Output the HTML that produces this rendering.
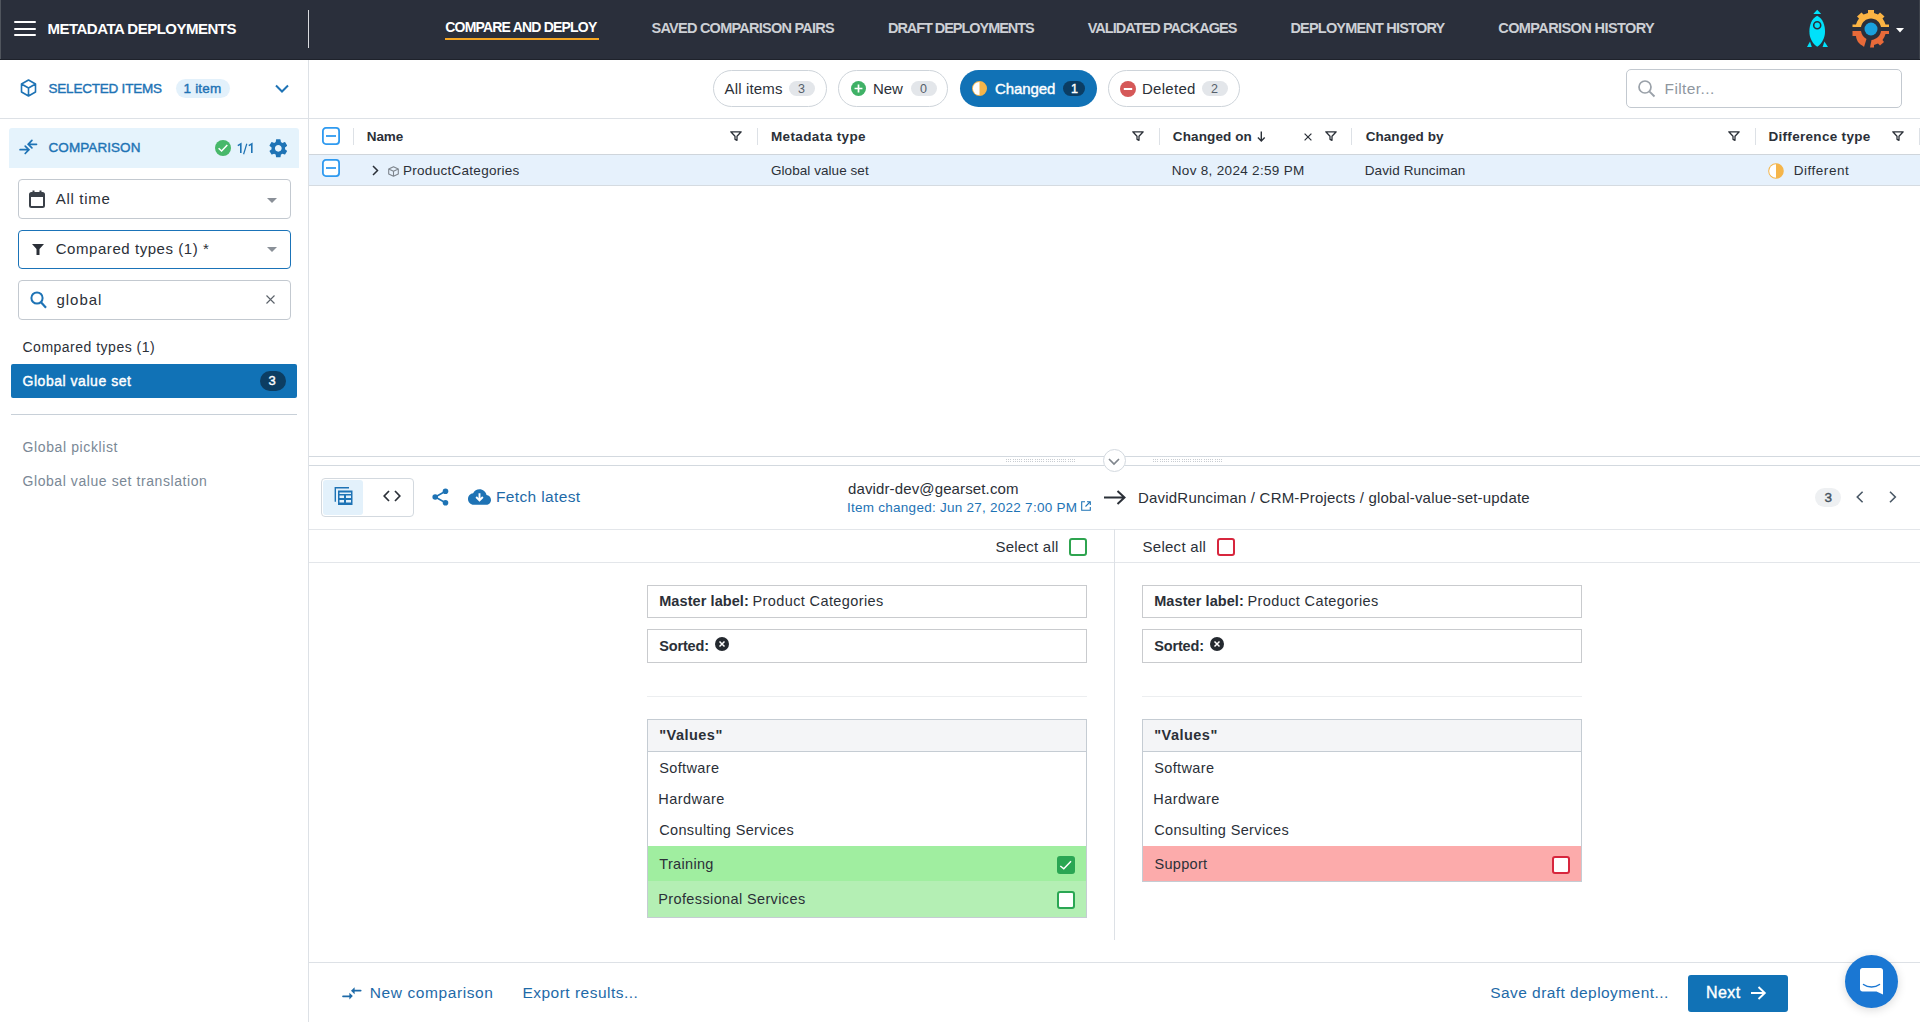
<!DOCTYPE html>
<html><head><meta charset="utf-8"><style>
*{box-sizing:border-box;margin:0;padding:0}
html,body{width:1920px;height:1022px;overflow:hidden;background:#fff;font-family:"Liberation Sans",sans-serif;color:#2b3038}
.a{position:absolute;white-space:nowrap}
.b{position:absolute}
svg{position:absolute;overflow:visible}
</style></head><body><div class="b" style="left:0px;top:0px;width:1920px;height:60px;background:#2a2f3b"></div><div class="b" style="left:0px;top:59px;width:1920px;height:1px;background:#1e222b"></div><div class="b" style="left:0px;top:0px;width:1px;height:59px;background:#50555d"></div><div class="b" style="left:1919px;top:0px;width:1px;height:59px;background:#3d424b"></div><div class="b" style="left:14px;top:21px;width:22px;height:2px;background:#fff;border-radius:1px"></div><div class="b" style="left:14px;top:28px;width:22px;height:2px;background:#fff;border-radius:1px"></div><div class="b" style="left:14px;top:34px;width:22px;height:2px;background:#fff;border-radius:1px"></div><div class="a" style="left:47.50px;top:21.25px;font-size:15px;line-height:15px;font-weight:bold;color:#ffffff;letter-spacing:-0.508px;">METADATA DEPLOYMENTS</div><div class="b" style="left:308px;top:10px;width:1px;height:38px;background:#d9dbdf"></div><div class="a" style="left:445.30px;top:20.30px;font-size:14px;line-height:14px;font-weight:bold;color:#ffffff;letter-spacing:-0.809px;">COMPARE AND DEPLOY</div><div class="b" style="left:445px;top:38px;width:154px;height:2px;background:#f5a623"></div><div class="a" style="left:651.50px;top:20.57px;font-size:14.5px;line-height:14.5px;font-weight:bold;color:#cdd0d5;letter-spacing:-0.753px;">SAVED COMPARISON PAIRS</div><div class="a" style="left:888.00px;top:20.57px;font-size:14.5px;line-height:14.5px;font-weight:bold;color:#cdd0d5;letter-spacing:-1.054px;">DRAFT DEPLOYMENTS</div><div class="a" style="left:1087.70px;top:20.57px;font-size:14.5px;line-height:14.5px;font-weight:bold;color:#cdd0d5;letter-spacing:-0.958px;">VALIDATED PACKAGES</div><div class="a" style="left:1290.40px;top:20.57px;font-size:14.5px;line-height:14.5px;font-weight:bold;color:#cdd0d5;letter-spacing:-0.795px;">DEPLOYMENT HISTORY</div><div class="a" style="left:1498.30px;top:20.57px;font-size:14.5px;line-height:14.5px;font-weight:bold;color:#cdd0d5;letter-spacing:-0.596px;">COMPARISON HISTORY</div><svg style="left:1807px;top:10px" width="22" height="38" viewBox="0 0 22 38">
<path d="M10.2 -0.2 L14.2 3.9 L6.3 3.9 Z" fill="#00e1fa"/>
<path d="M10.2 5.7 C15.8 8.5 18 15 18 21.5 C18 28 15 33.5 10.2 36.8 C5.4 33.5 2.4 28 2.4 21.5 C2.4 15 4.6 8.5 10.2 5.7 Z" fill="#00e1fa"/>
<circle cx="10.2" cy="15.2" r="3.5" fill="none" stroke="#2a2f3b" stroke-width="1.6"/>
<path d="M3 31.6 L4.8 37 L0 37 Z" fill="#00e1fa"/><path d="M17.4 31.6 L21 37 L15.6 37 Z" fill="#00e1fa"/>
</svg><svg style="left:1852px;top:10px" width="38" height="38" viewBox="0 0 38 38">
<path d="M16 0 H22 V3 L26 4.5 L28 2.5 L32.5 6.5 L30.5 8.5 C32 10.5 33 12.5 33.5 14.5 H37 V17 H29 C28 12 24 8.5 19 8.5 C14 8.5 10 12 9 17 H0.5 V14.5 H4 C4.5 12.5 5.5 10.5 7 8.5 L5 6.5 L9.5 2.5 L11.5 4.5 L16 3 Z" fill="#fbb443"/>
<path d="M0.5 21 H9 C9.5 24.5 11.5 27.5 14.5 29 L12 37 L11 36 L8.5 34.5 L6 32 C5 30 4 28 4 26 H0.5 Z" fill="#e86a39"/>
<path d="M37 21 H29 C28.5 26 24 29.5 19.5 30 L18 37.5 H22 V35 L26 33.5 L28 35.5 L32 32 L30.5 30 C32 28 33 26 33.5 24 H37 Z" fill="#e86a39"/>
<circle cx="19" cy="19" r="6.5" fill="#1aa0dc"/>
</svg><svg style="left:1896px;top:27.5px" width="8" height="5" viewBox="0 0 8 5"><path d="M0 0 H8 L4 4.5 Z" fill="#fff"/></svg><div class="b" style="left:308px;top:60px;width:1px;height:962px;background:#dde1e6"></div><div class="b" style="left:0px;top:118px;width:308px;height:1px;background:#dde1e6"></div><svg style="left:20px;top:79px" width="17" height="18" viewBox="0 0 17 18">
<path d="M8.5 1 L15.5 5 V13 L8.5 17 L1.5 13 V5 Z M1.5 5 L8.5 9 L15.5 5 M8.5 9 V17" fill="none" stroke="#1e73b5" stroke-width="1.6" stroke-linejoin="round"/></svg><div class="a" style="left:48.50px;top:81.53px;font-size:13.5px;line-height:13.5px;font-weight:normal;color:#1e73b5;letter-spacing:-0.213px;-webkit-text-stroke:0.4px #1e73b5;">SELECTED ITEMS</div><div class="b" style="left:176px;top:79px;width:54px;height:19px;background:#e3f1fb;border-radius:10px"></div><div class="a" style="left:183.50px;top:81.53px;font-size:13.5px;line-height:13.5px;font-weight:normal;color:#1e73b5;letter-spacing:0.197px;-webkit-text-stroke:0.4px #1e73b5;">1 item</div><svg style="left:275px;top:84px" width="14" height="9" viewBox="0 0 14 9"><path d="M1 1.5 L7 7.5 L13 1.5" fill="none" stroke="#1e73b5" stroke-width="2"/></svg><div class="b" style="left:9px;top:128px;width:290px;height:40px;background:#e5f3fc;border-radius:3px 3px 0 0"></div><svg style="left:19px;top:140px" width="19" height="15" viewBox="0 0 19 15">
<path d="M1.1 9.7 H9.6 M6.2 6.1 L9.9 9.7 L6.2 13.5" fill="none" stroke="#1e73b5" stroke-width="1.7" stroke-linecap="round"/>
<path d="M17.5 4.3 H9.5 M12.9 0.4 L9.2 4.3 L12.9 7.9" fill="none" stroke="#1e73b5" stroke-width="1.7" stroke-linecap="round"/></svg><div class="a" style="left:48.50px;top:141.33px;font-size:13.5px;line-height:13.5px;font-weight:normal;color:#1e73b5;letter-spacing:0.077px;-webkit-text-stroke:0.4px #1e73b5;">COMPARISON</div><svg style="left:215px;top:140px" width="16" height="16" viewBox="0 0 16 16"><circle cx="8" cy="8" r="8" fill="#48b86a"/>
<path d="M3.6 8.2 L6.6 11 L12.3 5" fill="none" stroke="#fff" stroke-width="1.5"/></svg><svg style="left:237px;top:143px" width="16" height="12" viewBox="0 0 16 12"><path d="M0.8 2.6 L3.8 0.9 V10" fill="none" stroke="#1e73b5" stroke-width="1.6"/><path d="M9.8 0.8 L6.6 11.2" stroke="#1e73b5" stroke-width="1.2"/><path d="M11.8 2.6 L14.8 0.9 V10" fill="none" stroke="#1e73b5" stroke-width="1.6"/></svg><svg style="left:267px;top:137.2px" width="22.6" height="22.6" viewBox="0 0 24 24"><path fill="#1e73b5" d="M19.14 12.94c.04-.3.06-.61.06-.94 0-.32-.02-.64-.07-.94l2.03-1.58a.49.49 0 0 0 .12-.61l-1.92-3.32a.488.488 0 0 0-.59-.22l-2.39.96c-.5-.38-1.03-.7-1.62-.94l-.36-2.54a.484.484 0 0 0-.48-.41h-3.84c-.24 0-.43.17-.47.41l-.36 2.54c-.59.24-1.13.57-1.62.94l-2.39-.96c-.22-.08-.47 0-.59.22L2.74 8.87c-.12.21-.08.47.12.61l2.03 1.58c-.05.3-.09.63-.09.94s.02.64.07.94l-2.03 1.58a.49.49 0 0 0-.12.61l1.92 3.32c.12.22.37.29.59.22l2.39-.96c.5.38 1.03.7 1.62.94l.36 2.54c.05.24.24.41.48.41h3.84c.24 0 .44-.17.47-.41l.36-2.54c.59-.24 1.13-.56 1.62-.94l2.39.96c.22.08.47 0 .59-.22l1.92-3.32c.12-.22.07-.47-.12-.61l-2.01-1.58zM12 15.6c-1.98 0-3.6-1.62-3.6-3.6s1.62-3.6 3.6-3.6 3.6 1.62 3.6 3.6-1.62 3.6-3.6 3.6z"/></svg><div class="b" style="left:18px;top:179px;width:273px;height:40px;border:1px solid #c3c9d0;border-radius:4px;background:#fff"></div><svg style="left:29px;top:190px" width="16" height="18" viewBox="0 0 16 18">
<rect x="1" y="3" width="14" height="14" rx="1.5" fill="none" stroke="#3a4048" stroke-width="2"/><rect x="1" y="3" width="14" height="4" fill="#3a4048"/>
<rect x="3.5" y="0.5" width="2" height="3" fill="#3a4048"/><rect x="10.5" y="0.5" width="2" height="3" fill="#3a4048"/></svg><div class="a" style="left:55.70px;top:191.25px;font-size:15px;line-height:15px;font-weight:normal;color:#2b3038;letter-spacing:0.710px;">All time</div><svg style="left:267px;top:197.5px" width="10" height="5" viewBox="0 0 10 5"><path d="M0 0 H10 L5 5 Z" fill="#8a9098"/></svg><div class="b" style="left:18px;top:230px;width:273px;height:39px;border:1px solid #1a73b8;border-radius:4px;background:#fff"></div><svg style="left:31.5px;top:243.5px" width="12" height="11" viewBox="0 0 12 11"><path d="M0 0 H12 L7.5 5 V11 H4.5 V5 Z" fill="#2b3038"/></svg><div class="a" style="left:55.70px;top:241.25px;font-size:15px;line-height:15px;font-weight:normal;color:#2b3038;letter-spacing:0.557px;">Compared types (1) *</div><svg style="left:267px;top:246.5px" width="10" height="5" viewBox="0 0 10 5"><path d="M0 0 H10 L5 5 Z" fill="#8a9098"/></svg><div class="b" style="left:18px;top:280px;width:273px;height:40px;border:1px solid #c3c9d0;border-radius:4px;background:#fff"></div><svg style="left:30px;top:291px" width="17" height="18" viewBox="0 0 17 18"><circle cx="7" cy="7" r="5.6" fill="none" stroke="#1e73b5" stroke-width="2"/><path d="M11 11.3 L16 16.8" stroke="#1e73b5" stroke-width="2.2"/></svg><div class="a" style="left:56.50px;top:292.25px;font-size:15px;line-height:15px;font-weight:normal;color:#2b3038;letter-spacing:0.960px;">global</div><svg style="left:265.5px;top:294.5px" width="9" height="9" viewBox="0 0 9 9"><path d="M0.5 0.5 L8.5 8.5 M8.5 0.5 L0.5 8.5" stroke="#5b626a" stroke-width="1.1"/></svg><div class="a" style="left:22.50px;top:339.70px;font-size:14px;line-height:14px;font-weight:normal;color:#2b3038;letter-spacing:0.497px;">Compared types (1)</div><div class="b" style="left:11px;top:364px;width:286px;height:34px;background:#1172b6;border-radius:2px"></div><div class="a" style="left:22.50px;top:373.80px;font-size:14px;line-height:14px;font-weight:normal;color:#ffffff;letter-spacing:0.533px;-webkit-text-stroke:0.4px #ffffff;">Global value set</div><div class="b" style="left:260px;top:371px;width:26px;height:20px;background:#0c3d62;border-radius:10px"></div><div class="a" style="left:268.50px;top:374.45px;font-size:13px;line-height:13px;font-weight:normal;color:#ffffff;letter-spacing:0.000px;-webkit-text-stroke:0.4px #ffffff;">3</div><div class="b" style="left:11px;top:414px;width:286px;height:1px;background:#c8d0d8"></div><div class="a" style="left:22.50px;top:440.40px;font-size:14px;line-height:14px;font-weight:normal;color:#7a8896;letter-spacing:0.616px;">Global picklist</div><div class="a" style="left:22.50px;top:474.10px;font-size:14px;line-height:14px;font-weight:normal;color:#7a8896;letter-spacing:0.571px;">Global value set translation</div><div class="b" style="left:309px;top:118px;width:1611px;height:1px;background:#dde1e6"></div><div class="b" style="left:712.5px;top:70px;width:114.5px;height:37px;border-radius:19px;border:1px solid #ced4da;background:#fff"></div><div class="a" style="left:724.50px;top:81.25px;font-size:15px;line-height:15px;font-weight:normal;color:#2b3038;letter-spacing:0.166px;">All items</div><div class="b" style="left:789px;top:81px;width:26px;height:15px;background:#e3e6ea;border-radius:8px"></div><div class="a" style="left:798.00px;top:83.17px;font-size:12.5px;line-height:12.5px;font-weight:normal;color:#56606b;letter-spacing:0.000px;">3</div><div class="b" style="left:838px;top:70px;width:110px;height:37px;border-radius:19px;border:1px solid #ced4da;background:#fff"></div><svg style="left:851px;top:81px" width="15" height="15" viewBox="0 0 16 16"><circle cx="8" cy="8" r="8" fill="#3fb166"/><path d="M8 3.8 V12.2 M3.8 8 H12.2" stroke="#fff" stroke-width="1.8"/></svg><div class="a" style="left:873.00px;top:81.25px;font-size:15px;line-height:15px;font-weight:normal;color:#2b3038;letter-spacing:-0.087px;">New</div><div class="b" style="left:911px;top:81px;width:26px;height:15px;background:#e3e6ea;border-radius:8px"></div><div class="a" style="left:920.00px;top:83.17px;font-size:12.5px;line-height:12.5px;font-weight:normal;color:#56606b;letter-spacing:0.000px;">0</div><div class="b" style="left:959.7px;top:70px;width:137.29999999999995px;height:37px;border-radius:19px;background:#1172b6"></div><svg style="left:972px;top:81px" width="15" height="15" viewBox="0 0 16 16"><circle cx="8" cy="8" r="7" fill="#f5b54a" stroke="#f5b54a" stroke-width="2"/><path d="M8 1 A7 7 0 0 0 8 15 Z" fill="#fff"/></svg><div class="a" style="left:995.00px;top:81.25px;font-size:15px;line-height:15px;font-weight:normal;color:#ffffff;letter-spacing:-0.091px;-webkit-text-stroke:0.4px #ffffff;">Changed</div><div class="b" style="left:1063px;top:81px;width:22px;height:15px;background:#0b3d64;border-radius:8px"></div><div class="a" style="left:1071.00px;top:83.17px;font-size:12.5px;line-height:12.5px;font-weight:normal;color:#ffffff;letter-spacing:0.000px;-webkit-text-stroke:0.4px #ffffff;">1</div><div class="b" style="left:1108px;top:70px;width:132px;height:37px;border-radius:19px;border:1px solid #ced4da;background:#fff"></div><svg style="left:1120px;top:81px" width="16" height="16" viewBox="0 0 16 16"><circle cx="8" cy="8" r="8" fill="#d55858"/><path d="M3.8 8 H12.2" stroke="#fff" stroke-width="2"/></svg><div class="a" style="left:1142.00px;top:81.25px;font-size:15px;line-height:15px;font-weight:normal;color:#2b3038;letter-spacing:0.273px;">Deleted</div><div class="b" style="left:1202px;top:81px;width:26px;height:15px;background:#e3e6ea;border-radius:8px"></div><div class="a" style="left:1211.00px;top:83.17px;font-size:12.5px;line-height:12.5px;font-weight:normal;color:#56606b;letter-spacing:0.000px;">2</div><div class="b" style="left:1626.3px;top:69.2px;width:276.2px;height:38.6px;border:1px solid #c3c9d0;border-radius:5px;background:#fff"></div><svg style="left:1638px;top:80px" width="18" height="17" viewBox="0 0 18 17"><circle cx="7" cy="7" r="6" fill="none" stroke="#9aa1a9" stroke-width="1.7"/><path d="M11.3 11.3 L16.5 16.5" stroke="#9aa1a9" stroke-width="1.9"/></svg><div class="a" style="left:1664.50px;top:81.03px;font-size:15.5px;line-height:15.5px;font-weight:normal;color:#8f979f;letter-spacing:0.412px;">Filter...</div><div class="b" style="left:309px;top:154px;width:1611px;height:1px;background:#cfd5db"></div><div class="b" style="left:309px;top:155px;width:1611px;height:30px;background:#e6f1fc"></div><div class="b" style="left:309px;top:185px;width:1611px;height:1px;background:#d5dbe1"></div><svg style="left:322.3px;top:127px" width="18" height="18" viewBox="0 0 18 18"><rect x="0.9" y="0.9" width="16.2" height="16.2" rx="3" fill="#fff" stroke="#2f9af0" stroke-width="1.8"/><path d="M4 9 H14" stroke="#2f9af0" stroke-width="1.8"/></svg><svg style="left:322.3px;top:159.3px" width="18" height="18" viewBox="0 0 18 18"><rect x="0.9" y="0.9" width="16.2" height="16.2" rx="3" fill="#fff" stroke="#2f9af0" stroke-width="1.8"/><path d="M4 9 H14" stroke="#2f9af0" stroke-width="1.8"/></svg><div class="b" style="left:352.5px;top:128px;width:1px;height:17px;background:#dde1e6"></div><div class="b" style="left:756.5px;top:128px;width:1px;height:17px;background:#dde1e6"></div><div class="b" style="left:1159px;top:128px;width:1px;height:17px;background:#dde1e6"></div><div class="b" style="left:1350.5px;top:128px;width:1px;height:17px;background:#dde1e6"></div><div class="b" style="left:1754.5px;top:128px;width:1px;height:17px;background:#dde1e6"></div><div class="b" style="left:1918.5px;top:128px;width:1px;height:17px;background:#dde1e6"></div><div class="a" style="left:366.80px;top:129.72px;font-size:13.5px;line-height:13.5px;font-weight:bold;color:#2b3038;letter-spacing:-0.120px;">Name</div><svg style="left:729.8px;top:131px" width="12" height="10" viewBox="0 0 12 10"><path d="M0.8 0.8 H11.2 L7 5.3 V9.3 L5 8.3 V5.3 Z" fill="none" stroke="#2b3038" stroke-width="1.3" stroke-linejoin="round"/></svg><div class="a" style="left:771.00px;top:129.72px;font-size:13.5px;line-height:13.5px;font-weight:bold;color:#2b3038;letter-spacing:0.374px;">Metadata type</div><svg style="left:1132px;top:131px" width="12" height="10" viewBox="0 0 12 10"><path d="M0.8 0.8 H11.2 L7 5.3 V9.3 L5 8.3 V5.3 Z" fill="none" stroke="#2b3038" stroke-width="1.3" stroke-linejoin="round"/></svg><div class="a" style="left:1172.80px;top:129.72px;font-size:13.5px;line-height:13.5px;font-weight:bold;color:#2b3038;letter-spacing:0.117px;">Changed on</div><svg style="left:1257px;top:130.5px" width="9" height="11" viewBox="0 0 9 11"><path d="M4.3 0.5 V10 M0.9 6.6 L4.3 10 L7.7 6.6" fill="none" stroke="#2b3038" stroke-width="1.4"/></svg><svg style="left:1303.5px;top:132.5px" width="8" height="8" viewBox="0 0 8 8"><path d="M0.6 0.6 L7.4 7.4 M7.4 0.6 L0.6 7.4" stroke="#2b3038" stroke-width="1.2"/></svg><svg style="left:1324.6px;top:131px" width="12" height="10" viewBox="0 0 12 10"><path d="M0.8 0.8 H11.2 L7 5.3 V9.3 L5 8.3 V5.3 Z" fill="none" stroke="#2b3038" stroke-width="1.3" stroke-linejoin="round"/></svg><div class="a" style="left:1365.70px;top:129.72px;font-size:13.5px;line-height:13.5px;font-weight:bold;color:#2b3038;letter-spacing:0.061px;">Changed by</div><svg style="left:1727.6px;top:131px" width="12" height="10" viewBox="0 0 12 10"><path d="M0.8 0.8 H11.2 L7 5.3 V9.3 L5 8.3 V5.3 Z" fill="none" stroke="#2b3038" stroke-width="1.3" stroke-linejoin="round"/></svg><div class="a" style="left:1768.40px;top:129.72px;font-size:13.5px;line-height:13.5px;font-weight:bold;color:#2b3038;letter-spacing:0.313px;">Difference type</div><svg style="left:1892px;top:131px" width="12" height="10" viewBox="0 0 12 10"><path d="M0.8 0.8 H11.2 L7 5.3 V9.3 L5 8.3 V5.3 Z" fill="none" stroke="#2b3038" stroke-width="1.3" stroke-linejoin="round"/></svg><svg style="left:371.5px;top:165px" width="7" height="11" viewBox="0 0 7 11"><path d="M1 1 L5.5 5.5 L1 10" fill="none" stroke="#2b3038" stroke-width="1.5"/></svg><svg style="left:388px;top:165.5px" width="11" height="11" viewBox="0 0 11 11"><path d="M5.5 0.7 L10.3 3 V8 L5.5 10.3 L0.7 8 V3 Z M0.7 3 L5.5 5.3 L10.3 3 M5.5 5.3 V10.3" fill="none" stroke="#7d848c" stroke-width="1.1" stroke-linejoin="round"/></svg><div class="a" style="left:403.00px;top:164.03px;font-size:13.5px;line-height:13.5px;font-weight:normal;color:#2b3038;letter-spacing:0.284px;">ProductCategories</div><div class="a" style="left:771.00px;top:164.12px;font-size:13.5px;line-height:13.5px;font-weight:normal;color:#2b3038;letter-spacing:0.056px;">Global value set</div><div class="a" style="left:1171.80px;top:164.12px;font-size:13.5px;line-height:13.5px;font-weight:normal;color:#2b3038;letter-spacing:0.312px;">Nov 8, 2024 2:59 PM</div><div class="a" style="left:1364.70px;top:164.12px;font-size:13.5px;line-height:13.5px;font-weight:normal;color:#2b3038;letter-spacing:0.120px;">David Runciman</div><svg style="left:1767.5px;top:163px" width="16" height="16" viewBox="0 0 16 16"><circle cx="8" cy="8" r="7" fill="#f5b54a" stroke="#f5b54a" stroke-width="1.6"/><path d="M8 1.2 A6.8 6.8 0 0 0 8 14.8 Z" fill="#fff"/></svg><div class="a" style="left:1793.70px;top:164.12px;font-size:13.5px;line-height:13.5px;font-weight:normal;color:#2b3038;letter-spacing:0.534px;">Different</div><div class="b" style="left:309px;top:456px;width:1611px;height:1px;background:#d3d9df"></div><div class="b" style="left:309px;top:465px;width:1611px;height:1px;background:#d3d9df"></div><div class="b" style="left:309px;top:466px;width:1611px;height:556px;background:#fff"></div><div class="b" style="left:1006px;top:459px;width:70px;height:1px;background:repeating-linear-gradient(90deg,#c9cdd2 0 1px,transparent 1px 2.2px)"></div><div class="b" style="left:1006px;top:461px;width:70px;height:1px;background:repeating-linear-gradient(90deg,#c9cdd2 0 1px,transparent 1px 2.2px)"></div><div class="b" style="left:1153px;top:459px;width:70px;height:1px;background:repeating-linear-gradient(90deg,#c9cdd2 0 1px,transparent 1px 2.2px)"></div><div class="b" style="left:1153px;top:461px;width:70px;height:1px;background:repeating-linear-gradient(90deg,#c9cdd2 0 1px,transparent 1px 2.2px)"></div><div class="b" style="left:1102.5px;top:448.5px;width:23px;height:23px;border:1px solid #d3d9df;border-radius:50%;background:#fff"></div><svg style="left:1108px;top:457.5px" width="12" height="7" viewBox="0 0 12 7"><path d="M1 1 L6 6 L11 1" fill="none" stroke="#80868d" stroke-width="1.7"/></svg><div class="b" style="left:320.5px;top:477.5px;width:93px;height:39.5px;border:1px solid #d3d9df;border-radius:4px"></div><div class="b" style="left:323px;top:480px;width:40px;height:35px;background:#e3f1fb;border-radius:3px"></div><svg style="left:333.5px;top:487px" width="19" height="18" viewBox="0 0 19 18"><path d="M1.3 14.7 V0.8 H15" fill="none" stroke="#1e73b5" stroke-width="1.4"/><path fill-rule="evenodd" fill="#1e73b5" d="M4 3.5 H18.5 V18 H4 Z M5.5 5.5 H17 V7 H5.5 Z M5.5 8.5 H10 V11 H5.5 Z M12 8.5 H17 V11 H12 Z M5.5 13 H10 V15.5 H5.5 Z M12 13 H17 V15.5 H12 Z"/></svg><svg style="left:383px;top:489.5px" width="18" height="12" viewBox="0 0 18 12"><path d="M6 1 L1.2 6 L6 11 M12 1 L16.8 6 L12 11" fill="none" stroke="#2b3038" stroke-width="1.7"/></svg><svg style="left:432px;top:488px" width="17" height="18" viewBox="0 0 17 18"><circle cx="13.5" cy="3.3" r="2.8" fill="#1e73b5"/><circle cx="3.2" cy="9" r="2.8" fill="#1e73b5"/><circle cx="13.5" cy="14.7" r="2.8" fill="#1e73b5"/><path d="M13.5 3.3 L3.2 9 L13.5 14.7" fill="none" stroke="#1e73b5" stroke-width="1.6"/></svg><svg style="left:467.5px;top:488.5px" width="23" height="16" viewBox="0 0 24 16"><path d="M19.35 6.04C18.67 2.59 15.64 0 12 0 9.11 0 6.6 1.64 5.35 4.04 2.34 4.36 0 6.91 0 10c0 3.31 2.69 6 6 6h13c2.76 0 5-2.24 5-5 0-2.64-2.05-4.78-4.65-4.96z" fill="#1e73b5"/><path d="M12 4 V11 M8.5 8 L12 11.5 L15.5 8" fill="none" stroke="#fff" stroke-width="2"/></svg><div class="a" style="left:496.00px;top:489.32px;font-size:15.5px;line-height:15.5px;font-weight:normal;color:#1e6aa8;letter-spacing:0.363px;">Fetch latest</div><div class="a" style="left:848.00px;top:480.55px;font-size:15px;line-height:15px;font-weight:normal;color:#2b3038;letter-spacing:0.128px;">davidr-dev@gearset.com</div><div class="a" style="left:847.00px;top:500.52px;font-size:13.5px;line-height:13.5px;font-weight:normal;color:#1e73b5;letter-spacing:0.259px;">Item changed: Jun 27, 2022 7:00 PM</div><svg style="left:1081px;top:501px" width="10" height="10" viewBox="0 0 10 10"><path d="M4 0.7 H0.7 V9.3 H9.3 V6 M6 0.7 H9.3 V4 M9.3 0.7 L4.5 5.5" fill="none" stroke="#1e73b5" stroke-width="1.1"/></svg><svg style="left:1104px;top:489.5px" width="22" height="15" viewBox="0 0 22 15"><path d="M0 7.5 H20 M13.5 1 L20.5 7.5 L13.5 14" fill="none" stroke="#2b3038" stroke-width="2"/></svg><div class="a" style="left:1138.00px;top:489.85px;font-size:15px;line-height:15px;font-weight:normal;color:#2b3038;letter-spacing:0.201px;">DavidRunciman / CRM-Projects / global-value-set-update</div><div class="b" style="left:1815px;top:488px;width:26px;height:19px;background:#eef0f2;border-radius:9.5px"></div><div class="a" style="left:1824.50px;top:490.82px;font-size:13.5px;line-height:13.5px;font-weight:normal;color:#44515e;letter-spacing:0.000px;-webkit-text-stroke:0.4px #44515e;">3</div><svg style="left:1856px;top:491px" width="8" height="12" viewBox="0 0 8 12"><path d="M6.6 0.8 L1.3 6 L6.6 11.2" fill="none" stroke="#4a5866" stroke-width="1.6"/></svg><svg style="left:1888.5px;top:491px" width="8" height="12" viewBox="0 0 8 12"><path d="M1 0.8 L6.3 6 L1 11.2" fill="none" stroke="#4a5866" stroke-width="1.6"/></svg><div class="b" style="left:309px;top:528.5px;width:1611px;height:1px;background:#e3e6ea"></div><div class="a" style="left:995.40px;top:538.95px;font-size:15px;line-height:15px;font-weight:normal;color:#2b3038;letter-spacing:0.230px;">Select all</div><div class="b" style="left:1069px;top:538px;width:18px;height:18px;border:2px solid #2ea44f;border-radius:3px;background:#fff"></div><div class="a" style="left:1142.50px;top:538.95px;font-size:15px;line-height:15px;font-weight:normal;color:#2b3038;letter-spacing:0.274px;">Select all</div><div class="b" style="left:1217px;top:538px;width:18px;height:18px;border:2px solid #d7263d;border-radius:3px;background:#fff"></div><div class="b" style="left:309px;top:562px;width:1611px;height:1px;background:#e3e6ea"></div><div class="b" style="left:1114px;top:529px;width:1px;height:411px;background:#dde1e6"></div><div class="b" style="left:647px;top:585.3px;width:440px;height:32.5px;border:1px solid #c9cbce"></div><div class="a" style="left:659.20px;top:593.67px;font-size:14.5px;line-height:14.5px;font-weight:bold;color:#2b3038;letter-spacing:0.082px;">Master label:</div><div class="a" style="left:752.50px;top:593.67px;font-size:14.5px;line-height:14.5px;font-weight:normal;color:#2b3038;letter-spacing:0.390px;">Product Categories</div><div class="b" style="left:647px;top:629.4px;width:440px;height:33.2px;border:1px solid #c9cbce"></div><div class="a" style="left:659.20px;top:638.67px;font-size:14.5px;line-height:14.5px;font-weight:bold;color:#2b3038;letter-spacing:-0.154px;">Sorted:</div><svg style="left:715.2px;top:637px" width="14" height="14" viewBox="0 0 14 14"><circle cx="7" cy="7" r="7" fill="#24292f"/><path d="M4.5 4.5 L9.5 9.5 M9.5 4.5 L4.5 9.5" stroke="#fff" stroke-width="1.5"/></svg><div class="b" style="left:647px;top:696px;width:440px;height:1px;background:#eceef0"></div><div class="b" style="left:647px;top:719px;width:440px;height:199px;border:1px solid #c5ccd3"></div><div class="b" style="left:648px;top:720px;width:438px;height:32px;background:#f4f5f7;border-bottom:1px solid #c5ccd3"></div><div class="a" style="left:659.20px;top:727.57px;font-size:14.5px;line-height:14.5px;font-weight:bold;color:#2b3038;letter-spacing:0.482px;">&quot;Values&quot;</div><div class="a" style="left:659.20px;top:761.17px;font-size:14.5px;line-height:14.5px;font-weight:normal;color:#2b3038;letter-spacing:0.378px;">Software</div><div class="a" style="left:658.20px;top:792.17px;font-size:14.5px;line-height:14.5px;font-weight:normal;color:#2b3038;letter-spacing:0.472px;">Hardware</div><div class="a" style="left:659.20px;top:822.97px;font-size:14.5px;line-height:14.5px;font-weight:normal;color:#2b3038;letter-spacing:0.356px;">Consulting Services</div><div class="b" style="left:648px;top:846px;width:438px;height:35px;background:#a0eea0"></div><div class="b" style="left:648px;top:881px;width:438px;height:36px;background:#b4efb4"></div><div class="a" style="left:659.30px;top:856.97px;font-size:14.5px;line-height:14.5px;font-weight:normal;color:#2b3038;letter-spacing:0.317px;">Training</div><div class="a" style="left:658.30px;top:891.97px;font-size:14.5px;line-height:14.5px;font-weight:normal;color:#2b3038;letter-spacing:0.371px;">Professional Services</div><svg style="left:1057px;top:856px" width="18" height="18" viewBox="0 0 18 18"><rect x="0" y="0" width="18" height="18" rx="3" fill="#2aa653"/><path d="M3.3 10 L6.8 12.8 L14 5.2" fill="none" stroke="#fff" stroke-width="1.5"/></svg><div class="b" style="left:1057px;top:891px;width:18px;height:18px;border:2px solid #2aa653;border-radius:3px;background:#fff"></div><div class="b" style="left:1142px;top:585.3px;width:440px;height:32.5px;border:1px solid #c9cbce"></div><div class="a" style="left:1154.20px;top:593.67px;font-size:14.5px;line-height:14.5px;font-weight:bold;color:#2b3038;letter-spacing:0.082px;">Master label:</div><div class="a" style="left:1247.50px;top:593.67px;font-size:14.5px;line-height:14.5px;font-weight:normal;color:#2b3038;letter-spacing:0.390px;">Product Categories</div><div class="b" style="left:1142px;top:629.4px;width:440px;height:33.2px;border:1px solid #c9cbce"></div><div class="a" style="left:1154.20px;top:638.67px;font-size:14.5px;line-height:14.5px;font-weight:bold;color:#2b3038;letter-spacing:-0.154px;">Sorted:</div><svg style="left:1210.2px;top:637px" width="14" height="14" viewBox="0 0 14 14"><circle cx="7" cy="7" r="7" fill="#24292f"/><path d="M4.5 4.5 L9.5 9.5 M9.5 4.5 L4.5 9.5" stroke="#fff" stroke-width="1.5"/></svg><div class="b" style="left:1142px;top:696px;width:440px;height:1px;background:#eceef0"></div><div class="b" style="left:1142px;top:719px;width:440px;height:163px;border:1px solid #c5ccd3"></div><div class="b" style="left:1143px;top:720px;width:438px;height:32px;background:#f4f5f7;border-bottom:1px solid #c5ccd3"></div><div class="a" style="left:1154.20px;top:727.57px;font-size:14.5px;line-height:14.5px;font-weight:bold;color:#2b3038;letter-spacing:0.482px;">&quot;Values&quot;</div><div class="a" style="left:1154.20px;top:761.17px;font-size:14.5px;line-height:14.5px;font-weight:normal;color:#2b3038;letter-spacing:0.378px;">Software</div><div class="a" style="left:1153.20px;top:792.17px;font-size:14.5px;line-height:14.5px;font-weight:normal;color:#2b3038;letter-spacing:0.472px;">Hardware</div><div class="a" style="left:1154.20px;top:822.97px;font-size:14.5px;line-height:14.5px;font-weight:normal;color:#2b3038;letter-spacing:0.356px;">Consulting Services</div><div class="b" style="left:1143px;top:846px;width:438px;height:35px;background:#fcabab"></div><div class="a" style="left:1154.50px;top:856.97px;font-size:14.5px;line-height:14.5px;font-weight:normal;color:#2b3038;letter-spacing:0.291px;">Support</div><div class="b" style="left:1552px;top:856px;width:18px;height:18px;border:2px solid #d7263d;border-radius:3px;background:#fff"></div><div class="b" style="left:309px;top:962px;width:1611px;height:1px;background:#dde1e6"></div><svg style="left:342px;top:986.5px" width="20" height="13" viewBox="0 0 20 13"><path d="M1 9.3 H7.6" fill="none" stroke="#1e6aa8" stroke-width="1.7" stroke-linecap="round"/><path d="M7.4 5.7 L7.4 12.5 L10.8 8.9 Z" fill="#1e6aa8"/><path d="M18.7 3.6 H12.4" fill="none" stroke="#1e6aa8" stroke-width="1.7" stroke-linecap="round"/><path d="M12.6 0.3 L12.6 7.3 L9 3.8 Z" fill="#1e6aa8"/></svg><div class="a" style="left:369.80px;top:985.43px;font-size:15.5px;line-height:15.5px;font-weight:normal;color:#1e6aa8;letter-spacing:0.584px;">New comparison</div><div class="a" style="left:522.40px;top:985.23px;font-size:15.5px;line-height:15.5px;font-weight:normal;color:#1e6aa8;letter-spacing:0.489px;">Export results...</div><div class="a" style="left:1490.30px;top:984.62px;font-size:15.5px;line-height:15.5px;font-weight:normal;color:#1e6aa8;letter-spacing:0.430px;">Save draft deployment...</div><div class="b" style="left:1688.2px;top:975.2px;width:99.5px;height:36.4px;background:#1172b6;border-radius:3px"></div><div class="a" style="left:1706.00px;top:985.00px;font-size:16px;line-height:16px;font-weight:normal;color:#ffffff;letter-spacing:0.449px;-webkit-text-stroke:0.4px #ffffff;">Next</div><svg style="left:1751px;top:985.5px" width="15" height="14" viewBox="0 0 15 14"><path d="M0 7 H13.5 M7.5 1 L13.8 7 L7.5 13" fill="none" stroke="#fff" stroke-width="1.9"/></svg><div class="b" style="left:1845px;top:955px;width:53px;height:53px;background:#1a77d3;border-radius:50%;box-shadow:0 2px 10px rgba(0,0,0,.15)"></div><svg style="left:1860px;top:968px" width="23" height="27" viewBox="0 0 23 27"><path d="M2.5 0 H20.5 C21.9 0 23 1.1 23 2.5 V26.5 L16.5 23.5 H2.5 C1.1 23.5 0 22.4 0 21 V2.5 C0 1.1 1.1 0 2.5 0 Z" fill="#fff"/><path d="M3.5 16.5 C8 19.8 15 19.8 19.5 16.5" fill="none" stroke="#1a77d3" stroke-width="1.5" stroke-linecap="round"/></svg></body></html>
